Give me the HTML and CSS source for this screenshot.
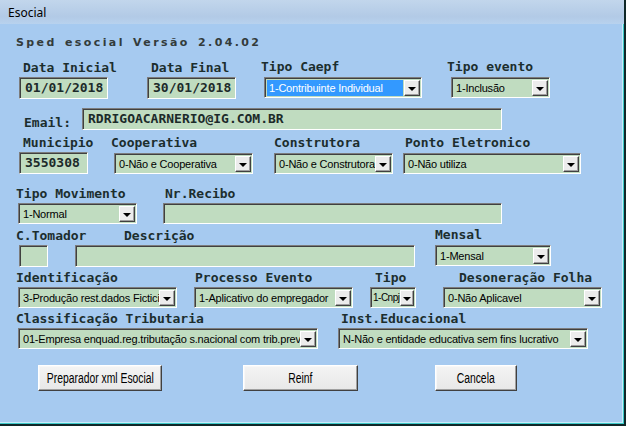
FILE: index.html
```html
<!DOCTYPE html>
<html lang="pt">
<head>
<meta charset="utf-8">
<title>Esocial</title>
<link rel="stylesheet" href="styles.css">
</head>
<body>
<div class="window">
  <div class="titlebar">Esocial</div>
  <div class="content">
    <div class="heading">Sped esocial Versão 2.04.02</div>

    <div class="row r1">
      <div class="fld f-dtini"><span class="lbl">Data Inicial</span><div class="input">01/01/2018</div></div>
      <div class="fld f-dtfim"><span class="lbl">Data Final</span><div class="input">30/01/2018</div></div>
      <div class="fld f-caepf"><span class="lbl">Tipo Caepf</span><div class="select"><span class="val sel-hl">1-Contribuinte Individual</span><span class="btn"><i class="tri"></i></span></div></div>
      <div class="fld f-evento"><span class="lbl">Tipo evento</span><div class="select"><span class="val">1-Inclusão</span><span class="btn"><i class="tri"></i></span></div></div>
    </div>

    <div class="row r2">
      <span class="lbl email-lbl">Email:</span>
      <div class="input email">RDRIGOACARNERIO@IG.COM.BR</div>
    </div>

    <div class="row r3">
      <div class="fld f-mun"><span class="lbl">Municipio</span><div class="input">3550308</div></div>
      <div class="fld f-coop"><span class="lbl">Cooperativa</span><div class="select"><span class="val">0-Não e Cooperativa</span><span class="btn"><i class="tri"></i></span></div></div>
      <div class="fld f-const"><span class="lbl">Construtora</span><div class="select"><span class="val">0-Não e Construtora</span><span class="btn"><i class="tri"></i></span></div></div>
      <div class="fld f-ponto"><span class="lbl">Ponto Eletronico</span><div class="select"><span class="val">0-Não utiliza</span><span class="btn"><i class="tri"></i></span></div></div>
    </div>

    <div class="row r4">
      <div class="fld f-mov"><span class="lbl">Tipo Movimento</span><div class="select"><span class="val">1-Normal</span><span class="btn"><i class="tri"></i></span></div></div>
      <div class="fld f-rec"><span class="lbl">Nr.Recibo</span><div class="input h21"></div></div>
    </div>

    <div class="row r5">
      <div class="fld f-tom"><span class="lbl">C.Tomador</span><div class="input"></div></div>
      <div class="fld f-desc"><span class="lbl">Descrição</span><div class="input"></div></div>
      <div class="fld f-mensal"><span class="lbl">Mensal</span><div class="select"><span class="val">1-Mensal</span><span class="btn"><i class="tri"></i></span></div></div>
    </div>

    <div class="row r6">
      <div class="fld f-ident"><span class="lbl">Identificação</span><div class="select"><span class="val">3-Produção rest.dados Ficticios</span><span class="btn"><i class="tri"></i></span></div></div>
      <div class="fld f-proc"><span class="lbl">Processo Evento</span><div class="select"><span class="val">1-Aplicativo do empregador</span><span class="btn"><i class="tri"></i></span></div></div>
      <div class="fld f-tipo"><span class="lbl">Tipo</span><div class="select"><span class="val">1-Cnpj</span><span class="btn"><i class="tri"></i></span></div></div>
      <div class="fld f-deson"><span class="lbl">Desoneração Folha</span><div class="select"><span class="val">0-Não Aplicavel</span><span class="btn"><i class="tri"></i></span></div></div>
    </div>

    <div class="row r7">
      <div class="fld f-class"><span class="lbl">Classificação Tributaria</span><div class="select"><span class="val">01-Empresa enquad.reg.tributação s.nacional com trib.previdenciaria</span><span class="btn"><i class="tri"></i></span></div></div>
      <div class="fld f-inst"><span class="lbl">Inst.Educacional</span><div class="select"><span class="val">N-Não e entidade educativa sem fins lucrativo</span><span class="btn"><i class="tri"></i></span></div></div>
    </div>

    <div class="row buttons">
      <button class="button b-prep"><span class="btxt">Preparador xml Esocial</span></button>
      <button class="button b-reinf"><span class="btxt">Reinf</span></button>
      <button class="button b-canc"><span class="btxt">Cancela</span></button>
    </div>
  </div>
</div>
</body>
</html>
```

FILE: styles.css
```css
html, body {
  margin: 0;
  padding: 0;
}
body {
  width: 626px;
  height: 426px;
  overflow: hidden;
  background: #a6caf0;
}
.window {
  position: relative;
  width: 626px;
  height: 426px;
  box-sizing: border-box;
  background: #a6caf0;
  border-right: 2px solid #102828;
  border-bottom: 2px solid #102828;
  box-shadow: inset -1px -1px 0 #3cc8c8, inset -2px -2px 0 #c8ecf8;
}
.titlebar {
  height: 24px;
  box-sizing: border-box;
  padding: 5px 0 0 8px;
  font-family: "Noto Sans", "Liberation Sans", sans-serif;
  font-size: 12px;
  line-height: 15px;
  color: #000;
  background: linear-gradient(#c2d6ec 0%, #b2cae6 70%, #b8d2ee 100%);
}
.content {
  padding-top: 12px;
}
.heading {
  margin-left: 16px;
  font-family: "DejaVu Sans", sans-serif;
  font-weight: bold;
  font-size: 11px;
  line-height: 14px;
  letter-spacing: 2.4px;
  word-spacing: 2px;
  color: #333b3b;
}
.row {
  display: flex;
  align-items: flex-end;
}
.fld {
  display: flex;
  flex-direction: column;
  flex: none;
}
.lbl {
  display: block;
  font-family: "DejaVu Sans Mono", "Liberation Mono", monospace;
  font-weight: bold;
  font-size: 13px;
  line-height: 15px;
  height: 15px;
  margin-bottom: 2px;
  color: #1c2e2e;
  white-space: nowrap;
}
.input {
  box-sizing: border-box;
  height: 22px;
  background: #c0dcc0;
  border: 1px solid;
  border-color: #7c7c7c #ffffff #ffffff #7c7c7c;
  box-shadow: inset 1px 1px 0 #404040;
  padding: 0 0 0 5px;
  font-family: "DejaVu Sans Mono", "Liberation Mono", monospace;
  font-weight: bold;
  font-size: 13px;
  line-height: 20px;
  color: #1c2a2a;
  white-space: nowrap;
  overflow: hidden;
}
.input.h21 {
  height: 21px;
}
.select {
  box-sizing: border-box;
  height: 21px;
  display: flex;
  align-items: stretch;
  background: #c0dcc0;
  border: 1px solid;
  border-color: #7c7c7c #ffffff #ffffff #7c7c7c;
  box-shadow: inset 1px 1px 0 #404040;
  padding: 2px 1px 1px 2px;
}
.val {
  flex: 1;
  min-width: 0;
  overflow: hidden;
  white-space: nowrap;
  padding-left: 2px;
  font-family: "Liberation Sans", Arial, sans-serif;
  font-size: 11px;
  letter-spacing: -0.2px;
  line-height: 16px;
  color: #000;
}
.sel-hl {
  background: #3399ff;
  color: #fff;
  margin-right: 1px;
}
.btn {
  flex: none;
  width: 16px;
  box-sizing: border-box;
  background: #ececec;
  border: 1px solid;
  border-color: #ffffff #404040 #404040 #ffffff;
  box-shadow: inset -1px -1px 0 #a0a0a0;
  display: flex;
  align-items: center;
  justify-content: center;
}
.tri {
  display: block;
  width: 0;
  height: 0;
  border-left: 4px solid transparent;
  border-right: 4px solid transparent;
  border-top: 4px solid #000;
  margin-top: 1px;
}

/* row spacing */
.r1 { margin-top: 9px; }
.r2 { margin-top: 9px; }
.r3 { margin-top: 5px; }
.r4 { margin-top: 12px; }
.r5 { margin-top: 3px; }
.r6 { margin-top: 3px; }
.r7 { margin-top: 3px; }
.buttons { margin-top: 16px; align-items: stretch; }

/* row 1 */
.f-dtini { margin-left: 19px; width: 89px; }
.f-dtini .lbl { margin-left: 4px; }
.f-dtfim { margin-left: 39px; width: 89px; }
.f-dtfim .lbl { margin-left: 4px; }
.f-caepf { margin-left: 28px; width: 158px; }
.f-caepf .lbl { margin-left: -3px; margin-bottom: 3px; }
.f-caepf .select { margin-bottom: 1px; }
.f-evento { margin-left: 29px; width: 99px; }
.f-evento .lbl { margin-left: -4px; margin-bottom: 3px; }
.f-evento .select { margin-bottom: 1px; }

/* row 2 */
.email-lbl { margin-left: 24px; width: 58px; margin-bottom: 0; }
.input.email { width: 420px; }

/* row 3 */
.f-mun { margin-left: 19px; width: 69px; }
.f-mun .lbl { margin-left: 4px; }
.f-coop { margin-left: 26px; width: 139px; }
.f-coop .lbl { margin-left: -3px; margin-bottom: 3px; }
.f-const { margin-left: 21px; width: 119px; }
.f-const .lbl { margin-bottom: 3px; }
.f-ponto { margin-left: 10px; width: 178px; }
.f-ponto .lbl { margin-left: 2px; margin-bottom: 3px; }

/* row 4 */
.f-mov { margin-left: 18px; width: 119px; }
.f-mov .lbl { margin-left: -2px; }
.f-rec { margin-left: 26px; width: 339px; }
.f-rec .lbl { margin-left: 2px; }

/* row 5 */
.f-tom { margin-left: 19px; width: 29px; }
.f-tom .lbl { margin-left: -3px; }
.f-desc { margin-left: 27px; width: 340px; }
.f-desc .lbl { margin-left: 49px; }
.f-mensal { margin-left: 20px; width: 116px; }
.f-mensal .select { margin-bottom: 1px; }
.f-mensal .lbl { margin-bottom: 3px; }

/* row 6 */
.f-ident { margin-left: 18px; width: 159px; }
.f-ident .lbl { margin-left: -2px; }
.f-proc { margin-left: 17px; width: 159px; }
.f-proc .lbl { margin-left: 1px; }
.f-tipo { margin-left: 17px; width: 46px; }
.f-tipo .lbl { margin-left: 5px; }
.f-tipo .select { padding-left: 1px; }
.f-tipo .val { font-size: 10px; letter-spacing: -0.5px; padding-left: 1px; }
.f-tipo .btn { width: 14px; }
.f-deson { margin-left: 27px; width: 159px; }
.f-deson .lbl { margin-left: 16px; }

/* row 7 */
.f-class { margin-left: 18px; width: 300px; }
.f-class .lbl { margin-left: -2px; }
.f-inst { margin-left: 20px; width: 250px; }
.f-inst .lbl { margin-left: 3px; }

/* buttons */
.button {
  flex: none;
  height: 26px;
  box-sizing: border-box;
  padding: 0;
  display: flex;
  align-items: center;
  justify-content: center;
  background: linear-gradient(#f4f4f4, #e8e8e8);
  border: 1px solid;
  border-color: #ffffff #404040 #404040 #ffffff;
  box-shadow: inset -1px -1px 0 #a0a0a0, inset 1px 1px 0 #f8f8f8;
  font-family: "Liberation Sans", Arial, sans-serif;
  font-size: 14px;
  color: #000;
  white-space: nowrap;
  overflow: visible;
}
.btxt {
  flex: none;
  display: block;
  transform: scaleX(0.74);
}
.b-prep { margin-left: 38px; width: 124px; }
.b-reinf { margin-left: 81px; width: 115px; }
.b-canc { margin-left: 77px; width: 82px; }
```
